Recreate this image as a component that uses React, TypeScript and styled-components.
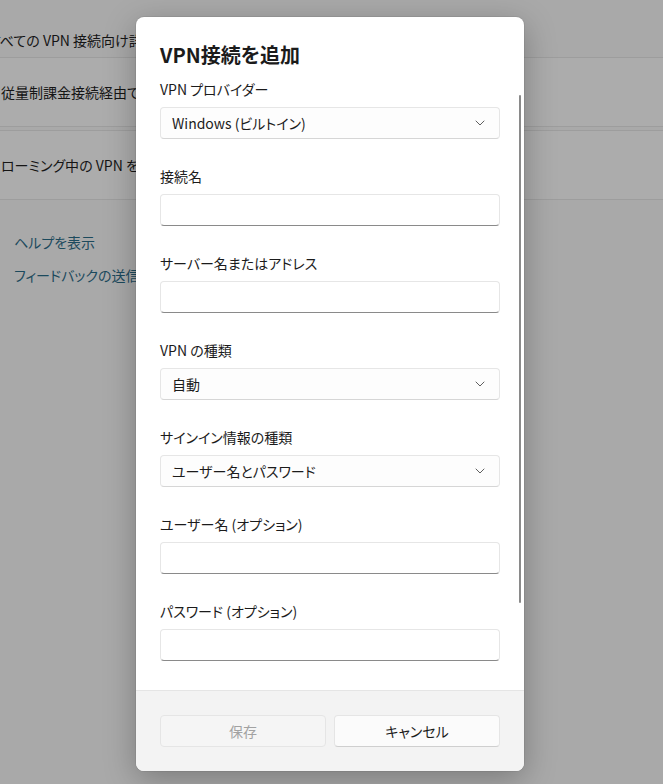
import React from "react";
import styled, { createGlobalStyle } from "styled-components";

const Global = createGlobalStyle`
  html, body { margin: 0; padding: 0; }
  body {
    background: #a9a9a9;
    font-family: "Segoe UI", "Noto Sans CJK JP", sans-serif;
    font-feature-settings: "palt" 1;
    color: #1b1b1b;
    -webkit-font-smoothing: antialiased;
  }
`;

const Page = styled.div`
  position: relative;
  width: 663px;
  height: 784px;
  overflow: hidden;
  background: #a9a9a9;
`;

const Settings = styled.div`
  display: flex;
  flex-direction: column;
`;

const Row = styled.div<{ $h: number; $bg?: string; $pt?: number }>`
  height: ${(p) => p.$h}px;
  background: ${(p) => p.$bg || "#acacac"};
  border-bottom: 1px solid #9d9d9d;
  display: flex;
  align-items: ${(p) => (p.$pt ? "flex-start" : "center")};
  padding-top: ${(p) => p.$pt || 0}px;
  box-sizing: border-box;
  font-size: 14px;
  line-height: 20px;
  color: #151515;
  white-space: nowrap;
`;

const RowClip = styled.div`
  width: 136px;
  overflow: hidden;
  flex: none;
`;

const RowText = styled.span<{ $shift?: number }>`
  display: inline-block;
  margin-left: ${(p) => p.$shift || 0}px;
`;

const Gap = styled.div`
  height: 3px;
  background: #a9a9a9;
  border-bottom: 1px solid #9d9d9d;
`;

const Links = styled.div`
  display: flex;
  flex-direction: column;
  gap: 13px;
  padding: 32px 0 0 14px;
`;

const LinkText = styled.span`
  font-size: 14px;
  line-height: 20px;
  color: #1c4a5d;
`;

const Dialog = styled.div`
  position: absolute;
  left: 136px;
  top: 17px;
  width: 388px;
  height: 754px;
  background: #ffffff;
  border-radius: 8px;
  box-shadow: 0 8px 32px rgba(0, 0, 0, 0.28), 0 0 0 1px rgba(0, 0, 0, 0.06);
  display: flex;
  flex-direction: column;
  overflow: hidden;
`;

const Body = styled.div`
  position: relative;
  flex: 1;
  padding: 24px 24px 0 24px;
  display: flex;
  flex-direction: column;
`;

const Title = styled.h1`
  margin: 0 0 10px 0;
  font-size: 20px;
  line-height: 28px;
  font-weight: 600;
  color: #1b1b1b;
`;

const Fields = styled.div`
  display: flex;
  flex-direction: column;
  gap: 27px;
`;

const Field = styled.div`
  display: flex;
  flex-direction: column;
`;

const Label = styled.label`
  font-size: 14px;
  line-height: 20px;
  margin-bottom: 8px;
  color: #1b1b1b;
`;

const Input = styled.div`
  height: 32px;
  box-sizing: border-box;
  border: 1px solid #e6e6e6;
  border-bottom: 1px solid #8a8a8a;
  border-radius: 4px;
  background: #ffffff;
`;

const Select = styled.div`
  height: 32px;
  box-sizing: border-box;
  border: 1px solid #e6e6e6;
  border-bottom-color: #d6d6d6;
  border-radius: 4px;
  background: #fdfdfd;
  display: flex;
  align-items: center;
  justify-content: space-between;
  padding: 0 14px 0 11px;
  font-size: 14px;
  line-height: 20px;
  color: #1b1b1b;
`;

const ScrollBar = styled.div`
  position: absolute;
  right: 3px;
  top: 78px;
  width: 2px;
  height: 508px;
  border-radius: 1px;
  background: #8a8a8a;
`;

const Footer = styled.div`
  height: 81px;
  box-sizing: border-box;
  border-top: 1px solid #e5e5e5;
  background: #f3f3f3;
  padding: 24px 24px 0 24px;
  display: grid;
  grid-template-columns: 1fr 1fr;
  column-gap: 8px;
  align-items: start;
`;

const Button = styled.button<{ $disabled?: boolean }>`
  height: 32px;
  box-sizing: border-box;
  border-radius: 4px;
  border: 1px solid #e5e5e5;
  border-bottom-color: ${(p) => (p.$disabled ? "#e5e5e5" : "#cfcfcf")};
  background: ${(p) => (p.$disabled ? "#f5f5f5" : "#fbfbfb")};
  color: ${(p) => (p.$disabled ? "#a2a2a2" : "#1b1b1b")};
  font-family: inherit;
  font-feature-settings: "palt" 1;
  font-size: 14px;
  line-height: 20px;
  padding: 0;
  cursor: default;
`;

const Chevron = () => (
  <svg width="10" height="6" viewBox="0 0 10 6" fill="none">
    <path d="M1 1 L5 5 L9 1" stroke="#5f5f5f" strokeWidth="1" strokeLinecap="round" strokeLinejoin="round" />
  </svg>
);

type F = { label: string; kind: "input" | "select"; value?: string };

const fields: F[] = [
  { label: "VPN プロバイダー", kind: "select", value: "Windows (ビルトイン)" },
  { label: "接続名", kind: "input" },
  { label: "サーバー名またはアドレス", kind: "input" },
  { label: "VPN の種類", kind: "select", value: "自動" },
  { label: "サインイン情報の種類", kind: "select", value: "ユーザー名とパスワード" },
  { label: "ユーザー名 (オプション)", kind: "input" },
  { label: "パスワード (オプション)", kind: "input" },
];

export default function App() {
  return (
    <Page>
      <Global />
      <Settings>
        <Row $h={58} $bg="#a9a9a9" $pt={30}>
          <RowClip>
            <RowText $shift={-12}>すべての VPN 接続向け詳細設定</RowText>
          </RowClip>
        </Row>
        <Row $h={69}>
          <RowClip>
            <RowText $shift={1}>従量制課金接続経由での VPN を許可</RowText>
          </RowClip>
        </Row>
        <Gap />
        <Row $h={69}>
          <RowClip>
            <RowText $shift={1}>ローミング中の VPN を許可</RowText>
          </RowClip>
        </Row>
        <Links>
          <LinkText>ヘルプを表示</LinkText>
          <LinkText>フィードバックの送信</LinkText>
        </Links>
      </Settings>
      <Dialog>
        <Body>
          <Title>VPN接続を追加</Title>
          <Fields>
            {fields.map((f) => (
              <Field key={f.label}>
                <Label>{f.label}</Label>
                {f.kind === "select" ? (
                  <Select>
                    <span>{f.value}</span>
                    <Chevron />
                  </Select>
                ) : (
                  <Input />
                )}
              </Field>
            ))}
          </Fields>
          <ScrollBar />
        </Body>
        <Footer>
          <Button $disabled>保存</Button>
          <Button>キャンセル</Button>
        </Footer>
      </Dialog>
    </Page>
  );
}
